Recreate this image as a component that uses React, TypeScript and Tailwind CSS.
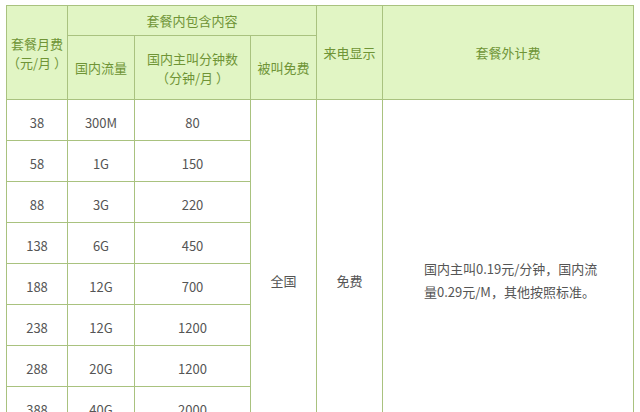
const rows = [
  { fee: "38", data: "300M", minutes: "80" },
  { fee: "58", data: "1G", minutes: "150" },
  { fee: "88", data: "3G", minutes: "220" },
  { fee: "138", data: "6G", minutes: "450" },
  { fee: "188", data: "12G", minutes: "700" },
  { fee: "238", data: "12G", minutes: "1200" },
  { fee: "288", data: "20G", minutes: "1200" },
  { fee: "388", data: "40G", minutes: "2000" },
  { fee: "588", data: "100G", minutes: "3000" },
];

const th = "border border-[#a9c27f] bg-[#e1f5c4] font-normal text-[#6f9436] text-center align-middle";
const td = "border border-[#a9c27f] text-center align-middle text-[#555] pt-[5px]";
const merged = "border border-[#a9c27f] text-center align-middle text-[#555] pb-[8px]";

export default function App() {
  return (
    <div
      className="h-[412px] w-[640px] overflow-hidden bg-white pl-[6px] pt-[5px]"
      style={{ fontFamily: '"Noto Sans CJK SC", "Liberation Sans", sans-serif' }}
    >
      <table className="w-[627px] table-fixed border-collapse text-[13px] leading-[19px]">
        <colgroup>
          <col className="w-[61px]" />
          <col className="w-[67px]" />
          <col className="w-[116px]" />
          <col className="w-[66px]" />
          <col className="w-[66px]" />
          <col className="w-[251px]" />
        </colgroup>
        <thead>
          <tr className="h-[30px]">
            <th rowSpan={2} className={th}>
              套餐月费
              <br />
              （元/月 ）
            </th>
            <th colSpan={3} className={th}>
              套餐内包含内容
            </th>
            <th rowSpan={2} className={th}>
              来电显示
            </th>
            <th rowSpan={2} className={th}>
              套餐外计费
            </th>
          </tr>
          <tr className="h-[64px]">
            <th className={th}>国内流量</th>
            <th className={th}>
              国内主叫分钟数
              <br />
              （分钟/月 ）
            </th>
            <th className={th}>被叫免费</th>
          </tr>
        </thead>
        <tbody>
          {rows.map((r, i) => (
            <tr key={r.fee} className="h-[41px]">
              <td className={td}>{r.fee}</td>
              <td className={td}>{r.data}</td>
              <td className={td}>{r.minutes}</td>
              {i === 0 && (
                <>
                  <td rowSpan={rows.length} className={merged}>
                    全国
                  </td>
                  <td rowSpan={rows.length} className={merged}>
                    免费
                  </td>
                  <td
                    rowSpan={rows.length}
                    className="border border-[#a9c27f] pb-[8px] pl-[41px] pr-[10px] text-left align-middle leading-[23px] text-[#555] whitespace-nowrap"
                  >
                    国内主叫0.19元/分钟，国内流
                    <br />
                    量0.29元/M，其他按照标准。
                  </td>
                </>
              )}
            </tr>
          ))}
        </tbody>
      </table>
    </div>
  );
}
